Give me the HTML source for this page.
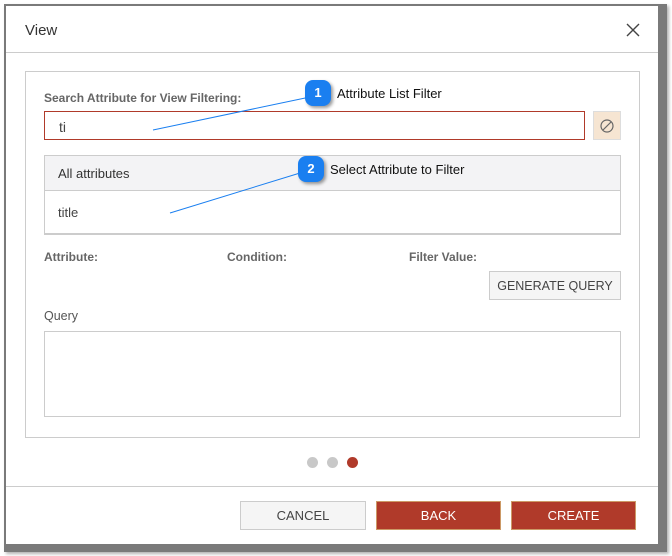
<!DOCTYPE html>
<html><head><style>
body{margin:0;width:672px;height:556px;background:#fff;position:relative;overflow:hidden;font-family:"Liberation Sans",sans-serif;color:#444}
.a{position:absolute;box-sizing:border-box}
.lbl{font-size:12px;font-weight:bold;color:#666}
.btn{font-size:13px;text-align:center;line-height:28px}
.bub{width:26px;height:26px;border-radius:8px;background:#1a7ff0;color:#fff;font-weight:bold;font-size:13px;text-align:center;line-height:26px;box-shadow:2px 2px 3px rgba(0,0,0,.4)}
</style></head><body>
<div class="a" style="left:4px;top:4px;width:663px;height:548px;background:#7a7a7a;box-shadow:2px 2px 3px rgba(0,0,0,.3)"></div>
<div class="a" style="left:6px;top:6px;width:652px;height:538px;background:#fff"></div>
<div class="a" style="left:25px;top:22px;font-size:15px;color:#333">View</div>
<svg class="a" style="left:625px;top:22px" width="16" height="16"><path d="M2 2L14 14M14 2L2 14" stroke="#444" stroke-width="1.4"/></svg>
<div class="a" style="left:6px;top:52px;width:652px;height:1px;background:#ccc"></div>
<div class="a" style="left:25px;top:71px;width:615px;height:367px;border:1px solid #ccc"></div>
<div class="a lbl" style="left:44px;top:91px">Search Attribute for View Filtering:</div>
<div class="a" style="left:44px;top:111px;width:541px;height:29px;border:1px solid #b03a2a;font-size:14px;padding:7px 0 0 14px">ti</div>
<div class="a" style="left:593px;top:111px;width:28px;height:29px;background:#f6e5d2;border:1px solid #ddd"></div>
<svg class="a" style="left:599px;top:118px" width="16" height="16"><circle cx="8" cy="8" r="6" fill="none" stroke="#666" stroke-width="1.2"/><path d="M4 12L12 4" stroke="#666" stroke-width="1.2"/></svg>
<div class="a" style="left:44px;top:155px;width:577px;height:80px;border:1px solid #ccc;border-bottom:2px solid #ccc"></div>
<div class="a" style="left:45px;top:156px;width:575px;height:35px;background:#f3f3f5;border-bottom:1px solid #ccc"></div>
<div class="a" style="left:58px;top:166px;font-size:13px;color:#333">All attributes</div>
<div class="a" style="left:58px;top:205px;font-size:13px">title</div>
<div class="a lbl" style="left:44px;top:250px">Attribute:</div>
<div class="a lbl" style="left:227px;top:250px">Condition:</div>
<div class="a lbl" style="left:409px;top:250px">Filter Value:</div>
<div class="a btn" style="left:489px;top:271px;width:132px;height:29px;border:1px solid #ccc;background:#f5f5f5;color:#444;font-size:12.5px">GENERATE QUERY</div>
<div class="a" style="left:44px;top:309px;font-size:12.5px;color:#555">Query</div>
<div class="a" style="left:44px;top:331px;width:577px;height:86px;border:1px solid #ccc"></div>
<div class="a" style="left:307px;top:457px;width:11px;height:11px;border-radius:50%;background:#c8c8c8"></div>
<div class="a" style="left:327px;top:457px;width:11px;height:11px;border-radius:50%;background:#c8c8c8"></div>
<div class="a" style="left:347px;top:457px;width:11px;height:11px;border-radius:50%;background:#b03a2a"></div>
<div class="a" style="left:6px;top:486px;width:652px;height:1px;background:#ccc"></div>
<div class="a btn" style="left:240px;top:501px;width:126px;height:29px;border:1px solid #ccc;background:#f5f5f5;color:#444">CANCEL</div>
<div class="a btn" style="left:376px;top:501px;width:125px;height:29px;background:#b03a2a;color:#fff;border:1px solid #c96">BACK</div>
<div class="a btn" style="left:511px;top:501px;width:125px;height:29px;background:#b03a2a;color:#fff;border:1px solid #c96">CREATE</div>
<svg class="a" style="left:0;top:0" width="672" height="556"><path d="M153 130L310 97" stroke="#1a7ff0" stroke-width="1"/><path d="M170 213L300 173" stroke="#1a7ff0" stroke-width="1"/></svg>
<div class="a bub" style="left:305px;top:80px">1</div>
<div class="a" style="left:337px;top:86px;font-size:13px;color:#111">Attribute List Filter</div>
<div class="a bub" style="left:298px;top:156px">2</div>
<div class="a" style="left:330px;top:162px;font-size:13px;color:#111">Select Attribute to Filter</div>
</body></html>
